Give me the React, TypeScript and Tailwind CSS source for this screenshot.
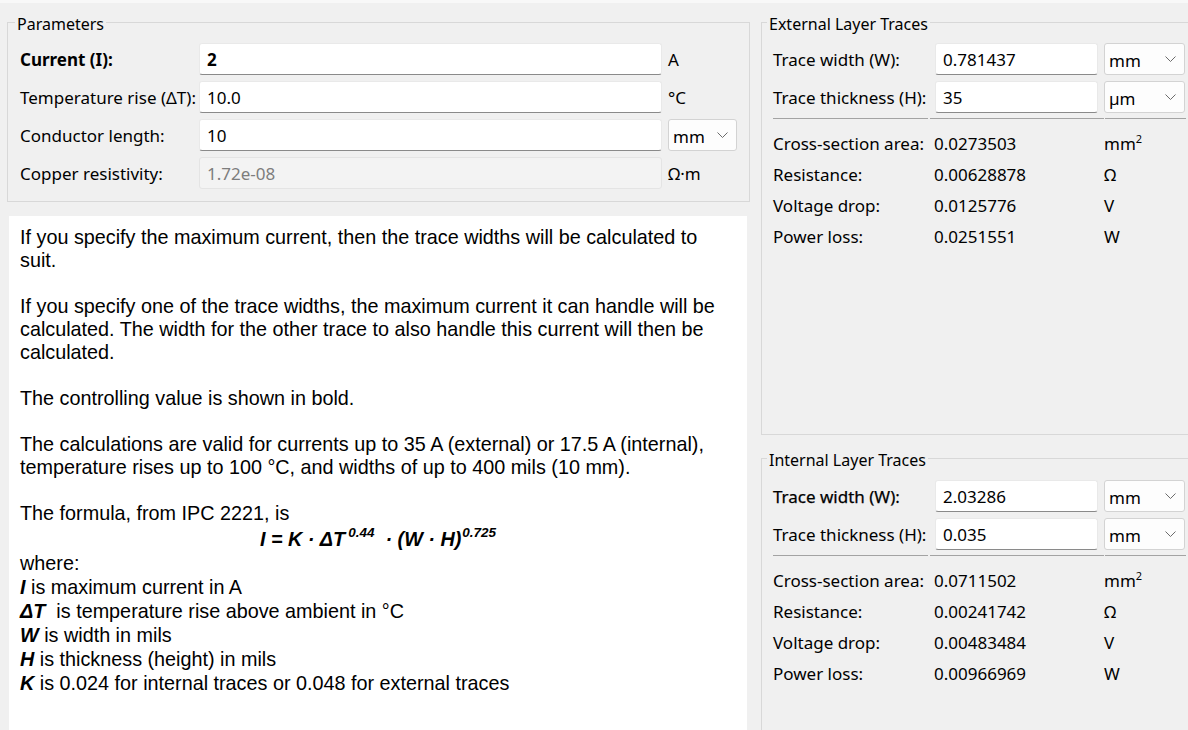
import React from "react";

const Chevron = () => (
  <svg width="11" height="6" viewBox="0 0 11 6" className="shrink-0">
    <path d="M0.5 0.5 L5.5 5.5 L10.5 0.5" fill="none" stroke="#6b6b6b" strokeWidth="1" />
  </svg>
);

const TextBox = (props: { value: string; bold?: boolean; disabled?: boolean }) => (
  <div
    className={`h-[32px] flex items-center pl-[7px] pt-[1px] rounded-[3px] border ${
      props.disabled
        ? "bg-[#f3f3f3] border-[#e4e4e4] text-[#7d7d7d]"
        : "bg-white border-[#e9e9e9] border-b-[#8a8a8a] text-black"
    } ${props.bold ? "font-bold" : ""}`}
  >
    {props.value}
  </div>
);

const Combo = (props: { value: string }) => (
  <div className="h-[32px] flex items-center justify-between pl-[4px] pr-[8px] rounded-[3px] border border-[#d3d3d3] bg-[#fdfdfd]">
    <span className="pt-[4px]">{props.value}</span>
    <Chevron />
  </div>
);

const Label = (props: { children: React.ReactNode; className?: string }) => (
  <div className={`h-[32px] flex items-center pt-[2px] whitespace-nowrap ${props.className ?? ""}`}>
    {props.children}
  </div>
);

const Legend = (props: { title: string; ml: string }) => (
  <legend className={`${props.ml} px-[2px] pt-[4px] leading-[20px] text-[16px]`}>{props.title}</legend>
);

const Sq = () => <sup className="text-[11px] -top-[7px]">2</sup>;

const Results = (props: { rows: string[][] }) => (
  <div className="mt-[9px] grid grid-cols-[161px_170px_1fr] pl-[11px] whitespace-nowrap">
    {props.rows.map((r) => (
      <React.Fragment key={r[0]}>
        <div className="h-[31px] flex items-center pt-[1px]">{r[0]}</div>
        <div className="h-[31px] flex items-center pt-[1px]">{r[1]}</div>
        <div className="h-[31px] flex items-center pt-[1px]">
          {r[2] === "mm2" ? (
            <span>
              mm
              <Sq />
            </span>
          ) : (
            r[2]
          )}
        </div>
      </React.Fragment>
    ))}
  </div>
);

const Separator = () => (
  <div className="mt-[5px] flex pl-[11px]">
    <div className="h-px w-[155px] bg-[#a3a3a3]" />
    <div className="h-px w-[174px] ml-[2px] bg-[#a3a3a3]" />
    <div className="h-px w-[81px] ml-[1px] bg-[#a3a3a3]" />
  </div>
);

const LayerGroup = (props: {
  title: string;
  width: string;
  thickness: string;
  thickUnit: string;
  boldWidth?: boolean;
  rows: string[][];
  className: string;
}) => (
  <fieldset className={`border border-[#d8d8d8] w-[440px] ${props.className}`}>
    <Legend title={props.title} ml="ml-[5px]" />
    <div className="grid grid-cols-[156px_163px_81px] gap-x-[6px] gap-y-[6px] pl-[11px]">
      <Label className={props.boldWidth ? "[-webkit-text-stroke:0.25px_black]" : ""}>Trace width (W):</Label>
      <TextBox value={props.width} />
      <Combo value="mm" />
      <Label>Trace thickness (H):</Label>
      <TextBox value={props.thickness} />
      <Combo value={props.thickUnit} />
    </div>
    <Separator />
    <Results rows={props.rows} />
  </fieldset>
);

const B = (props: { children: React.ReactNode }) => <b className="italic">{props.children}</b>;

export default function App() {
  return (
    <div className="w-[1188px] h-[730px] overflow-hidden bg-[#f0f0f0] font-['Noto_Sans',sans-serif] text-[17px] text-black">
      <div className="h-[3px] bg-[#f8f8f8]" />
      <div className="flex">
        <div className="w-[750px] shrink-0 pl-[7px] pt-[7px] flex flex-col">
          <fieldset className="w-[743px] border border-[#d8d8d8] pt-[9px] pb-[12px]">
            <Legend title="Parameters" ml="ml-[7px]" />
            <div className="grid grid-cols-[173px_463px_69px] gap-x-[6px] gap-y-[6px] pl-[12px]">
              <Label className="font-bold">Current (I):</Label>
              <TextBox value="2" bold />
              <Label>A</Label>

              <Label>Temperature rise (ΔT):</Label>
              <TextBox value="10.0" />
              <Label>°C</Label>

              <Label>Conductor length:</Label>
              <TextBox value="10" />
              <Combo value="mm" />

              <Label>Copper resistivity:</Label>
              <TextBox value="1.72e-08" disabled />
              <Label>Ω·m</Label>
            </div>
          </fieldset>

          <div className="ml-[2px] mt-[14px] w-[738px] h-[520px] bg-white pt-[10px] pl-[11px] pr-[11px] font-['Liberation_Sans',Arial,sans-serif] text-[19.8px] leading-[23px]">
            <p className="mb-[23px]">
              If you specify the maximum current, then the trace widths will be calculated to suit.
            </p>
            <p className="mb-[23px]">
              If you specify one of the trace widths, the maximum current it can handle will be calculated. The width
              for the other trace to also handle this current will then be calculated.
            </p>
            <p className="mb-[23px]">The controlling value is shown in bold.</p>
            <p className="mb-[23px]">
              The calculations are valid for currents up to 35 A (external) or 17.5 A (internal), temperature rises up
              to 100 °C, and widths of up to 400 mils (10 mm).
            </p>
            <p>The formula, from IPC 2221, is</p>
            <p className="text-center font-bold italic mt-[3px] mb-[1px]">
              I = K · ΔT<sup className="text-[13.5px] -top-[9px] ml-[3px]">0.44</sup>
              {"\u00a0\u00a0· (W · H)"}
              <sup className="text-[13.5px] -top-[9px] ml-[1px]">0.725</sup>
            </p>
            <p>where:</p>
            <div className="leading-[24px]">
              <p>
                <B>I</B> is maximum current in A
              </p>
              <p>
                <B>ΔT</B>
                {"\u00a0 is temperature rise above ambient in °C"}
              </p>
              <p>
                <B>W</B> is width in mils
              </p>
              <p>
                <B>H</B> is thickness (height) in mils
              </p>
              <p>
                <B>K</B> is 0.024 for internal traces or 0.048 for external traces
              </p>
            </div>
          </div>
        </div>

        <div className="w-[449px] shrink-0 pl-[11px] pt-[7px]">
          <LayerGroup
            title="External Layer Traces"
            width="0.781437"
            thickness="35"
            thickUnit="µm"
            className="h-[425px] pt-[9px]"
            rows={[
              ["Cross-section area:", "0.0273503", "mm2"],
              ["Resistance:", "0.00628878", "Ω"],
              ["Voltage drop:", "0.0125776", "V"],
              ["Power loss:", "0.0251551", "W"],
            ]}
          />
          <LayerGroup
            title="Internal Layer Traces"
            width="2.03286"
            thickness="0.035"
            thickUnit="mm"
            boldWidth
            className="mt-[11px] h-[320px] pt-[10px]"
            rows={[
              ["Cross-section area:", "0.0711502", "mm2"],
              ["Resistance:", "0.00241742", "Ω"],
              ["Voltage drop:", "0.00483484", "V"],
              ["Power loss:", "0.00966969", "W"],
            ]}
          />
        </div>
      </div>
    </div>
  );
}
